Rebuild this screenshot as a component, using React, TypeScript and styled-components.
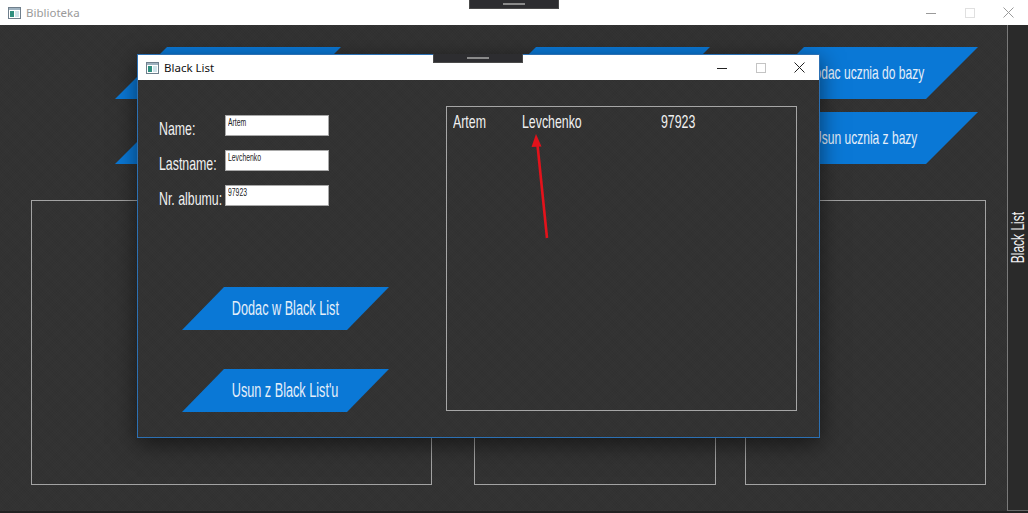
import React from "react";
import styled, { createGlobalStyle } from "styled-components";

const NARROW = `"Liberation Sans Narrow", "Arial Narrow", "Liberation Sans", Arial, sans-serif`;
const UI = `"Noto Sans", "Open Sans", "Liberation Sans", sans-serif`;
const SX = 0.65;

const texture = `
  background-color: #323232;
  background-image:
    repeating-linear-gradient(45deg, rgba(255,255,255,0.012) 0 1px, transparent 1px 2px),
    repeating-linear-gradient(-45deg, rgba(0,0,0,0.03) 0 1px, transparent 1px 2px);
`;

const Global = createGlobalStyle`
  html, body { margin: 0; padding: 0; background: #323232; }
  body { width: 1028px; height: 513px; overflow: hidden; }
`;

const Desktop = styled.div`
  position: relative;
  width: 1028px;
  height: 513px;
  overflow: hidden;
  display: flex;
  flex-direction: column;
  font-family: ${UI};
`;

const TitleBar = styled.div<{ $h: number }>`
  display: flex;
  align-items: center;
  flex: none;
  height: ${(p) => p.$h}px;
  background: #ffffff;
  padding-left: 8px;
  box-sizing: border-box;
`;

const TitleText = styled.span<{ $color: string }>`
  margin-left: 5px;
  font-family: ${UI};
  font-size: 11.5px;
  color: ${(p) => p.$color};
  white-space: nowrap;
`;

const Controls = styled.div`
  margin-left: auto;
  display: flex;
  height: 100%;
`;

const CtrlBtn = styled.div<{ $color: string }>`
  width: 39px;
  height: 100%;
  display: flex;
  align-items: center;
  justify-content: center;
  color: ${(p) => p.$color};
`;

const Workspace = styled.div`
  flex: 1;
  display: flex;
  ${texture}
  border-bottom: 2px solid #222;
`;

const Columns = styled.div`
  flex: 1;
  display: flex;
  padding: 22px 0 0 31px;
`;

const Column = styled.div<{ $w: number; $gap: number }>`
  width: ${(p) => p.$w}px;
  margin-right: ${(p) => p.$gap}px;
  display: flex;
  flex-direction: column;
  flex: none;
`;

const ParaButton = styled.div<{
  $w: number;
  $h: number;
  $slant: number;
  $fs: number;
  $ml?: number;
  $mt?: number;
}>`
  flex: none;
  width: ${(p) => p.$w}px;
  height: ${(p) => p.$h}px;
  margin-left: ${(p) => p.$ml ?? 0}px;
  margin-top: ${(p) => p.$mt ?? 0}px;
  background: #0a78d6;
  clip-path: polygon(${(p) => p.$slant}px 0, 100% 0, calc(100% - ${(p) => p.$slant}px) 100%, 0 100%);
  display: flex;
  align-items: center;
  justify-content: center;
  color: #e4eef9;
  font-family: ${NARROW};
  font-size: ${(p) => p.$fs}px;
`;

const Squeeze = styled.span<{ $origin?: string }>`
  display: inline-block;
  white-space: nowrap;
  transform: scaleX(${SX});
  transform-origin: ${(p) => p.$origin ?? "center"};
`;

const Frame = styled.div`
  margin-top: 36px;
  height: 285px;
  box-sizing: border-box;
  border: 1px solid #a3a3a3;
`;

const SidePanel = styled.div`
  width: 21px;
  flex: none;
  box-sizing: border-box;
  border-left: 1px solid #7a7a7a;
  border-bottom: 1px solid #6a6a6a;
  background: #2a2a2a;
  display: flex;
  flex-direction: column;
  align-items: center;
  padding-top: 173px;
`;

const SideLabel = styled.span`
  writing-mode: vertical-rl;
  transform: rotate(180deg) scaleY(${SX});
  font-family: ${NARROW};
  font-size: 18.5px;
  color: #f2f2f2;
  white-space: nowrap;
`;

const DockTab = styled.div<{ $x: number; $y: number }>`
  position: absolute;
  left: ${(p) => p.$x}px;
  top: ${(p) => p.$y}px;
  width: 90px;
  height: 9px;
  box-sizing: border-box;
  background: #2d2d30;
  border: 1px solid #4a4a4a;
  border-top: none;
  display: flex;
  justify-content: center;
  padding-top: 3px;
  &::after {
    content: "";
    width: 22px;
    height: 2px;
    background: #8a8a8a;
  }
`;

const Dialog = styled.section`
  position: absolute;
  left: 137px;
  top: 54px;
  width: 683px;
  height: 384px;
  box-sizing: border-box;
  border: 1px solid #2c70b3;
  ${texture}
  box-shadow: 0 6px 22px rgba(0, 0, 0, 0.55);
  display: flex;
  flex-direction: column;
`;

const DialogBody = styled.div`
  flex: 1;
  display: flex;
`;

const FormPane = styled.div`
  width: 308px;
  flex: none;
  box-sizing: border-box;
  padding: 35px 0 0 22px;
  display: flex;
  flex-direction: column;
`;

const FieldGrid = styled.div`
  display: grid;
  grid-template-columns: 65px 104px;
  grid-template-rows: repeat(3, 21px);
  row-gap: 14px;
`;

const Label = styled.div`
  font-family: ${NARROW};
  font-size: 19px;
  line-height: 21px;
  padding-top: 3px;
  margin-left: -1px;
  color: #f0f0f0;
  white-space: nowrap;
  width: 62px;
`;

const TextBox = styled.div`
  box-sizing: border-box;
  height: 21px;
  background: #ffffff;
  border: 1px solid #a9a9a9;
  padding: 1px 2px;
  font-family: ${NARROW};
  font-size: 10.5px;
  line-height: 11px;
  color: #222;
  overflow: hidden;
`;

const ListBox = styled.div`
  margin-top: 26px;
  width: 351px;
  height: 305px;
  flex: none;
  box-sizing: border-box;
  border: 1px solid #a6a6a6;
  padding: 4px 0 0 6px;
`;

const ListRow = styled.div`
  display: grid;
  grid-template-columns: 69px 139px auto;
  font-family: ${NARROW};
  font-size: 19px;
  line-height: 21px;
  color: #f0f0f0;
`;

const Arrow = styled.svg`
  position: absolute;
  left: 525px;
  top: 128px;
  width: 30px;
  height: 115px;
`;

const AppIcon = () => (
  <svg width="13" height="12" viewBox="0 0 13 12">
    <rect x="0.5" y="0.5" width="12" height="11" fill="#fff" stroke="#6f7f8c" />
    <rect x="1" y="1" width="11" height="2" fill="#9fb2c0" />
    <rect x="2" y="4" width="4" height="6" fill="#2f8f7f" />
    <rect x="7" y="4" width="4" height="6" fill="#cfe3ea" />
  </svg>
);

const MinIcon = () => (
  <svg width="10" height="10" viewBox="0 0 10 10">
    <line x1="0" y1="5.5" x2="10" y2="5.5" stroke="currentColor" strokeWidth="1" />
  </svg>
);

const MaxIcon = () => (
  <svg width="10" height="10" viewBox="0 0 10 10">
    <rect x="0.5" y="0.5" width="9" height="9" fill="none" stroke="currentColor" strokeWidth="1" />
  </svg>
);

const CloseIcon = () => (
  <svg width="11" height="11" viewBox="0 0 11 11">
    <path d="M0.5 0.5 L10.5 10.5 M10.5 0.5 L0.5 10.5" stroke="currentColor" strokeWidth="1" />
  </svg>
);

const WindowControls = ({ dark, maxColor }: { dark: string; maxColor: string }) => (
  <Controls>
    <CtrlBtn $color={dark}>
      <MinIcon />
    </CtrlBtn>
    <CtrlBtn $color={maxColor}>
      <MaxIcon />
    </CtrlBtn>
    <CtrlBtn $color={dark}>
      <CloseIcon />
    </CtrlBtn>
  </Controls>
);

const columns = [
  { id: "a", w: 401, gap: 42, ml: 84, top: "", bottom: "" },
  { id: "b", w: 242, gap: 29, ml: 10, top: "", bottom: "" },
  { id: "c", w: 241, gap: 0, ml: 7, top: "Dodac ucznia do bazy", bottom: "Usun ucznia z bazy" },
];

export default function App() {
  return (
    <>
      <Global />
      <Desktop>
        <TitleBar $h={25}>
          <AppIcon />
          <TitleText $color="#9a9a9a">Biblioteka</TitleText>
          <WindowControls dark="#9a9a9a" maxColor="#e0e0e0" />
        </TitleBar>
        <Workspace>
          <Columns>
            {columns.map((c) => (
              <Column key={c.id} $w={c.w} $gap={c.gap}>
                <ParaButton $w={226} $h={52} $slant={52} $fs={18.5} $ml={c.ml}>
                  {c.top && <Squeeze>{c.top}</Squeeze>}
                </ParaButton>
                <ParaButton $w={226} $h={52} $slant={52} $fs={18.5} $ml={c.ml} $mt={13}>
                  {c.bottom && <Squeeze>{c.bottom}</Squeeze>}
                </ParaButton>
                <Frame />
              </Column>
            ))}
          </Columns>
          <SidePanel>
            <SideLabel>Black List</SideLabel>
          </SidePanel>
        </Workspace>

        <DockTab $x={469} $y={0} />

        <Dialog>
          <TitleBar $h={25}>
            <AppIcon />
            <TitleText $color="#111">Black List</TitleText>
            <WindowControls dark="#222" maxColor="#c4c4c4" />
          </TitleBar>
          <DialogBody>
            <FormPane>
              <FieldGrid>
                <Label>
                  <Squeeze $origin="left">Name:</Squeeze>
                </Label>
                <TextBox>
                  <Squeeze $origin="left">Artem</Squeeze>
                </TextBox>
                <Label>
                  <Squeeze $origin="left">Lastname:</Squeeze>
                </Label>
                <TextBox>
                  <Squeeze $origin="left">Levchenko</Squeeze>
                </TextBox>
                <Label>
                  <Squeeze $origin="left">Nr. albumu:</Squeeze>
                </Label>
                <TextBox>
                  <Squeeze $origin="left">97923</Squeeze>
                </TextBox>
              </FieldGrid>
              <ParaButton $w={207} $h={43} $slant={42} $fs={19.5} $ml={22} $mt={81}>
                <Squeeze>Dodac w Black List</Squeeze>
              </ParaButton>
              <ParaButton $w={207} $h={43} $slant={42} $fs={19.5} $ml={22} $mt={39}>
                <Squeeze>Usun z Black List'u</Squeeze>
              </ParaButton>
            </FormPane>
            <ListBox>
              <ListRow>
                <Squeeze $origin="left">Artem</Squeeze>
                <Squeeze $origin="left">Levchenko</Squeeze>
                <Squeeze $origin="left">97923</Squeeze>
              </ListRow>
            </ListBox>
          </DialogBody>
        </Dialog>

        <DockTab $x={433} $y={54} />

        <Arrow viewBox="0 0 30 115">
          <line x1="22" y1="110" x2="12.5" y2="17" stroke="#e3121b" strokeWidth="2.6" />
          <polygon points="11,6 6.5,19 16.5,18.5" fill="#e3121b" />
        </Arrow>
      </Desktop>
    </>
  );
}
